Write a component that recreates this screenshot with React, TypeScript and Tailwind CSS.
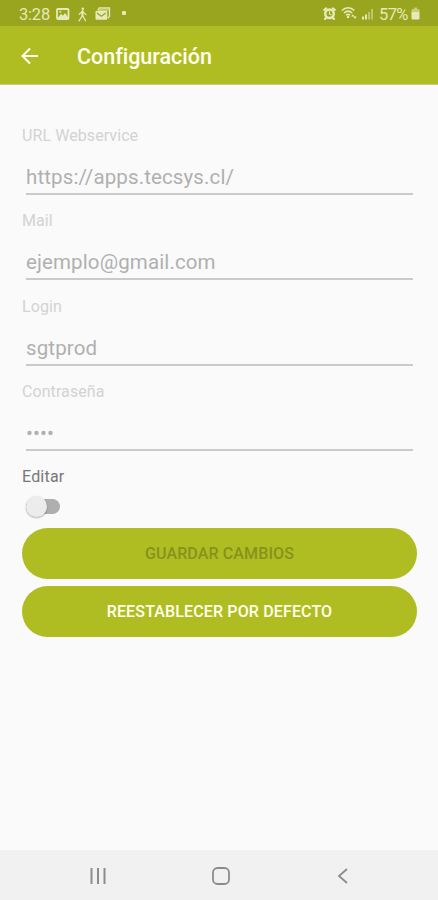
import { useState } from "react"

type Field = { label: string; value: string }

const fields: Field[] = [
  { label: "URL Webservice", value: "https://apps.tecsys.cl/" },
  { label: "Mail", value: "ejemplo@gmail.com" },
  { label: "Login", value: "sgtprod" },
  { label: "Contraseña", value: "••••" },
]

function StatusBar() {
  return (
    <div className="flex h-[26px] shrink-0 items-center bg-[#99a41f] pt-[2px] pr-[18px] pl-[19px] text-[#e6e9b8]">
      <span className="w-[37px] pt-[3px] text-[16.5px] leading-none tracking-[-0.2px] whitespace-nowrap">3:28</span>
      {/* Image */}
      <svg width="14" height="12" viewBox="0 0 14 12" fill="none">
        <rect x="1" y="1" width="11.5" height="10" rx="1" stroke="currentColor" strokeWidth="1.8" />
        <path d="M2 9.5 5 6l2 1.6L9 5l3 4v1.5H2z" fill="currentColor" />
        <circle cx="4.3" cy="3.8" r="1" fill="currentColor" />
      </svg>
      {/* Walking man */}
      <svg className="ml-[7px]" width="11" height="15" viewBox="0 0 11 15" fill="none" stroke="currentColor" strokeWidth="1.3" strokeLinecap="round">
        <circle cx="5.8" cy="1.8" r="1.3" fill="currentColor" stroke="none" />
        <path d="M5.5 4v4.5L2 13.8M5.6 8.5l3 5.3M5.3 4.6 2.2 7.2M5.8 4.6l3.2 3" />
        <path d="M5.5 4.2v4" strokeWidth="2" />
      </svg>
      {/* Mail stack */}
      <svg className="ml-[7px]" width="16" height="14" viewBox="0 0 16 14" fill="none">
        <path d="M3 3.2 4 1h10.5v8.5L12.8 11" stroke="currentColor" strokeWidth="1.3" strokeLinejoin="round" />
        <path d="M4 2h9.5v2H3z" fill="currentColor" opacity=".5" />
        <rect x="0.5" y="3.8" width="11.8" height="9" rx="1" fill="currentColor" />
        <path d="m2 6 4.3 3.3L10.8 6" stroke="#99a41f" strokeWidth="1.2" />
      </svg>
      <span className="mb-[2px] ml-[11px] size-[4px] rounded-[1px] bg-current" />
      <div className="ml-auto flex items-center">
        {/* Alarm */}
        <svg className="mb-[2px]" width="13" height="13" viewBox="0 0 13 13" fill="none" stroke="currentColor" strokeLinecap="round">
          <circle cx="6.5" cy="6.8" r="4.3" strokeWidth="2.5" />
          <path d="M1.2 2.8 3.2 1.4M11.8 2.8 9.8 1.4M2 12l1.2-1.2M11 12l-1.2-1.2" strokeWidth="2.2" />
          <path d="M6.5 4.6v2.4l1.6.8" strokeWidth="1.1" />
        </svg>
        {/* Wifi */}
        <svg className="mb-[2px] ml-[5px]" width="17" height="14" viewBox="0 0 17 14" fill="none" stroke="currentColor" strokeWidth="1.6">
          <path d="M.9 4.5C4.5.8 9.7.8 13.3 4.5M3 7c2.5-2.3 5.7-2.3 8.2 0M5.1 9.3c1.2-1.2 2.8-1.2 4 0" />
          <circle cx="7.1" cy="11" r="1.3" fill="currentColor" stroke="none" />
          <path d="m10 10.500 1.8-2.3 1.8 2.3zM12.2 10.6h3.6L14 13z" fill="currentColor" stroke="none" />
        </svg>
        {/* Signal */}
        <svg className="ml-[4px]" width="12" height="12" viewBox="0 0 12 12" fill="currentColor">
          <rect x="0" y="8.5" width="2" height="3" />
          <rect x="3" y="6.5" width="2" height="5" />
          <rect x="6" y="4" width="2" height="7.5" opacity=".5" />
          <rect x="9" y="1" width="2" height="10.5" opacity=".5" />
        </svg>
        <span className="ml-[5px] w-[32px] pt-[3px] text-[16.5px] leading-none tracking-[-0.6px] whitespace-nowrap">57%</span>
        {/* Battery */}
        <svg className="mb-px" width="9" height="13" viewBox="0 0 9 13" fill="currentColor">
          <path d="M3 .5h3V2h1.3q1.2 0 1.2 1.2v1.5h-8V3.2Q.5 2 1.7 2H3z" opacity=".6" />
          <path d="M.5 4.700h8v6.600q0 1.200-1.200 1.200H1.700q-1.200 0-1.200-1.200z" />
        </svg>
      </div>
    </div>
  )
}

function TopBar() {
  return (
    <header className="flex h-[59px] shrink-0 items-center border-b border-[#c6cd78] bg-[#afbd22] pt-[3px] pl-[21px] text-[#fffff0]">
      <button aria-label="Volver" className="mb-[2px] w-[56px]">
        <svg width="18" height="18" viewBox="0 0 18 18" fill="none" stroke="currentColor" strokeWidth="2">
          <path d="M17 9H2M9 1.5 1.5 9 9 16.5" />
        </svg>
      </button>
      <h1 className="text-[21.5px] leading-none font-medium tracking-[-0.02px]">Configuración</h1>
    </header>
  )
}

function TextField({ label, value }: Field) {
  return (
    <div className="h-[85.33px]">
      <div className="h-5 text-[16px] leading-5 tracking-[0.08px] text-[#d3d3d3]">{label}</div>
      <div className="mr-[4px] ml-1 h-[49px] border-b-2 border-[#cacaca] pt-[19px] text-[20.5px] leading-6 tracking-[0.12px] text-[#b0b0b0]">
        {value}
      </div>
    </div>
  )
}

function Toggle({ on, onChange }: { on: boolean; onChange: () => void }) {
  return (
    <button role="switch" aria-checked={on} aria-label="Editar" onClick={onChange} className="ml-[4px] flex h-[22px] w-[34px] items-center">
      <span className={`flex h-[15px] w-full items-center rounded-full bg-[#afafaf] ${on ? "justify-end" : ""}`}>
        <span className="size-[21px] shrink-0 rounded-full bg-[#ececec] shadow-[0_1px_2px_rgba(0,0,0,0.3)]" />
      </span>
    </button>
  )
}

export default function App() {
  const [editing, setEditing] = useState(false)

  return (
    <div className="flex h-[900px] w-[438px] flex-col overflow-hidden bg-[#fafafa] font-[Roboto,sans-serif]">
      <StatusBar />
      <TopBar />

      <main className="flex-1 pt-[41px] pr-[21px] pl-[22px]">
        {fields.map((field) => (
          <TextField key={field.label} {...field} />
        ))}
        <div className="h-[28px] text-[16px] leading-5 tracking-[0.2px] text-[#777]">Editar</div>
        <Toggle on={editing} onChange={() => setEditing(!editing)} />

        <div className="mt-[11px] flex flex-col gap-[7px]">
          <button disabled={!editing} className="h-[51px] rounded-full bg-[#afbd22] pt-px text-[16px] font-medium tracking-[0.12px] text-[#87921c]">
            GUARDAR CAMBIOS
          </button>
          <button className="h-[51px] rounded-full bg-[#afbd22] pt-px text-[16px] font-medium tracking-[0.14px] text-[#fffff0]">
            REESTABLECER POR DEFECTO
          </button>
        </div>
      </main>

      {/* Android navigation */}
      <nav className="flex h-[50px] shrink-0 items-center justify-between bg-[#f1f1f1] pt-[2px] pr-[89px] pl-[89px] text-[#8c8c8c]">
        <svg width="18" height="16" viewBox="0 0 18 16" fill="none" stroke="currentColor" strokeWidth="2">
          <path d="M2.5 0v16M9 0v16M15.5 0v16" />
        </svg>
        <svg className="mr-[3px]" width="18" height="18" viewBox="0 0 18 18" fill="none" stroke="currentColor" strokeWidth="1.8">
          <rect x="1" y="1" width="16" height="16" rx="4.5" />
        </svg>
        <svg width="12" height="16" viewBox="0 0 12 16" fill="none" stroke="currentColor" strokeWidth="1.8">
          <path d="M10 1 2 8l8 7" />
        </svg>
      </nav>
    </div>
  )
}
